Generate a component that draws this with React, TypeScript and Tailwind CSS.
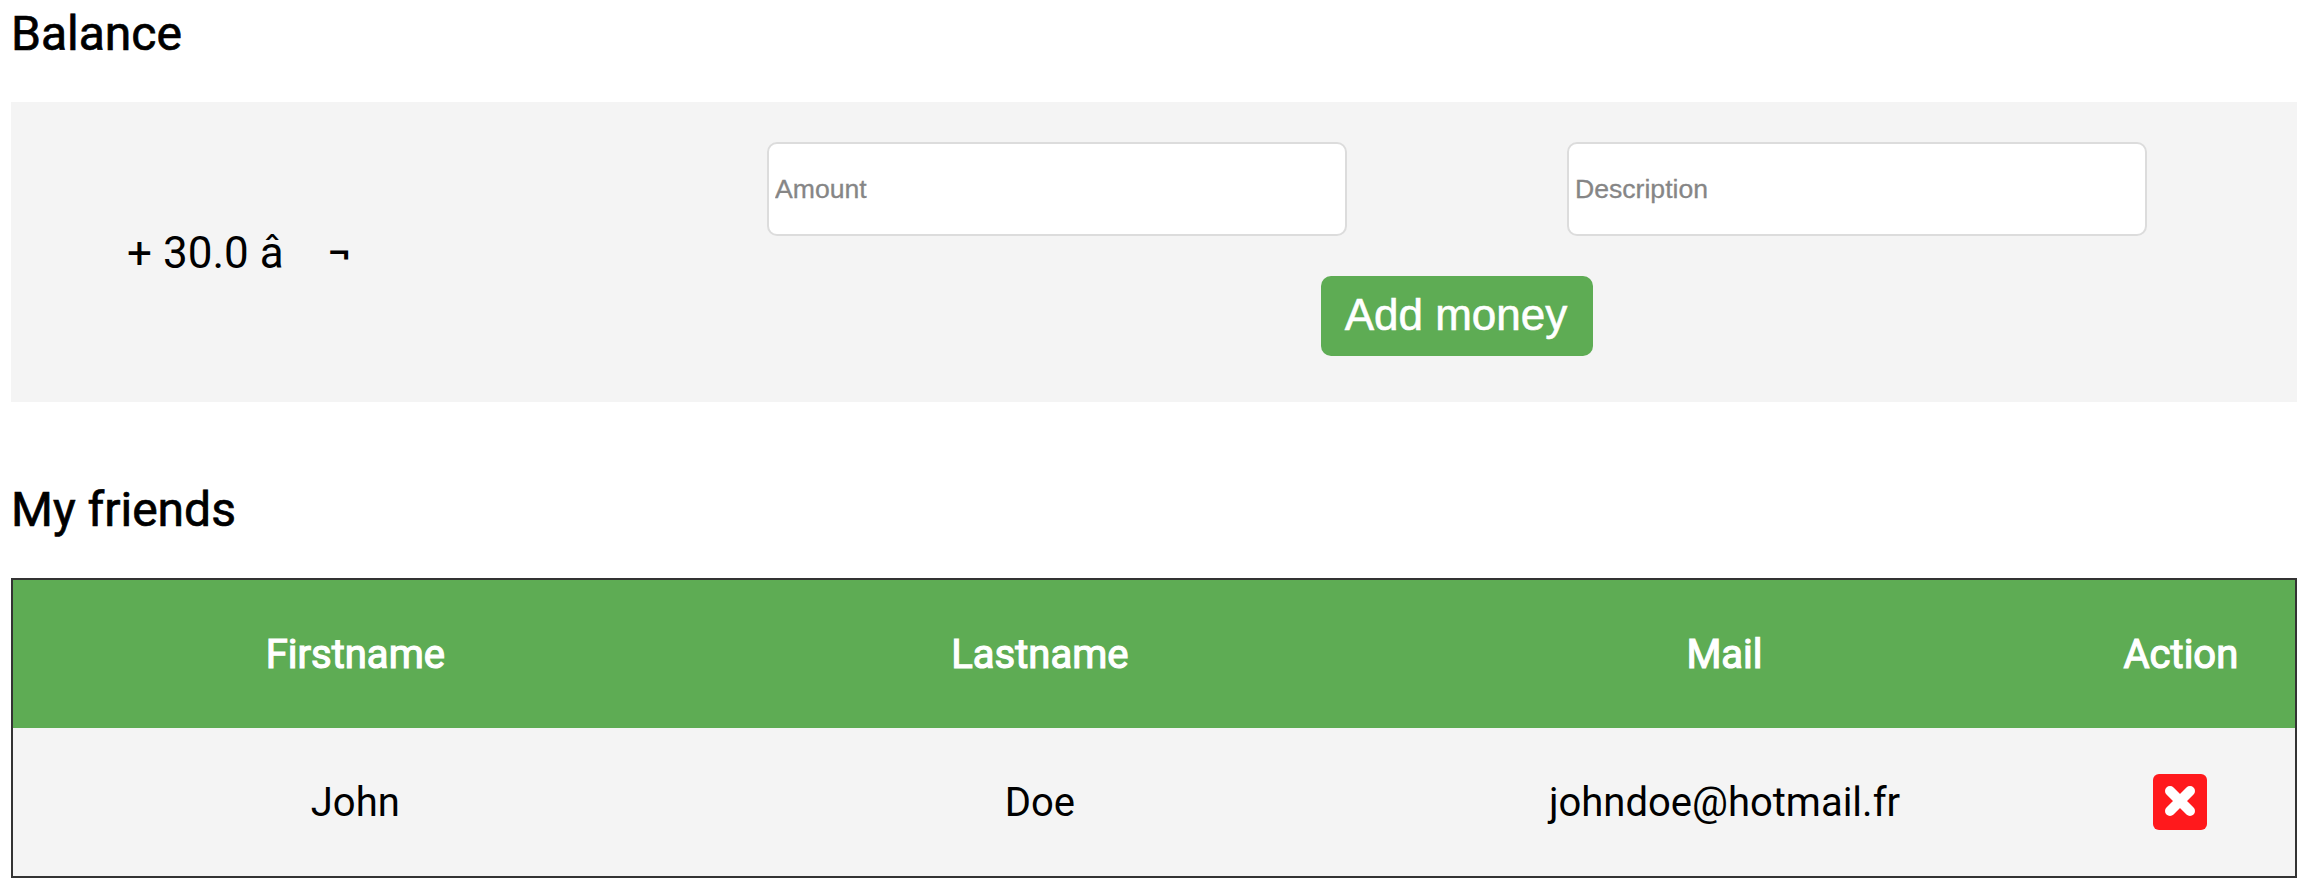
const columns = ["Firstname", "Lastname", "Mail", "Action"];
const friends = [{ firstname: "John", lastname: "Doe", mail: "johndoe@hotmail.fr" }];

const grid = "grid grid-cols-[3fr_3fr_3fr_1fr] items-center text-center";

function CrossIcon() {
  return (
    <svg viewBox="0 0 30 30" className="size-[30px] shrink-0" fill="none" stroke="currentColor" strokeWidth="10" strokeLinecap="round">
      <path d="M5 5 25 25M25 5 5 25" />
    </svg>
  );
}

function MoneyInput({ placeholder }: { placeholder: string }) {
  return (
    <input
      placeholder={placeholder}
      className="h-[94px] w-[580px] rounded-[10px] border-2 border-[#dcdcdc] bg-white px-[6px] font-['Liberation_Sans',sans-serif] text-[26.6px] placeholder:text-[#868686] [-webkit-text-stroke:0.3px_#868686]"
    />
  );
}

export default function App() {
  return (
    <main className="h-[892px] overflow-hidden bg-white pl-[11px] pr-[15px] font-[Roboto,sans-serif] text-black">
      <h2 className="h-[102px] pt-[4px] text-[48px] leading-[60px] [-webkit-text-stroke:0.7px_black]">Balance</h2>
      <section className="flex h-[300px] bg-[#f4f4f4]">
        <div className="flex w-[457px] items-center justify-center pt-[2px] text-[44px] whitespace-pre">
          {"+ 30.0 â"}
          <span className="ml-[44px]">¬</span>
        </div>
        <form className="ml-[189px] flex flex-1 flex-col pt-10">
          <div className="flex w-full justify-start gap-[220px] pl-[110px]">
            <MoneyInput placeholder="Amount" />
            <MoneyInput placeholder="Description" />
          </div>
          <button
            type="button"
            className="mt-10 ml-[664px] h-20 w-[272px] rounded-[10px] bg-[#5eac54] pr-[2px] pb-[2px] font-['Liberation_Sans',sans-serif] text-[44px] text-white [-webkit-text-stroke:0.6px_white]"
          >
            Add money
          </button>
        </form>
      </section>
      <h2 className="h-[176px] pt-[78px] text-[48px] leading-[60px] [-webkit-text-stroke:0.7px_black]">My friends</h2>
      <section className="h-[300px] border-2 border-[#333] bg-[#f4f4f4] text-[40px]">
        <div className={`${grid} h-[148px] bg-[#5eac54] pt-[2px] text-white [-webkit-text-stroke:1.2px_white]`}>
          {columns.map((c) => (
            <span key={c}>{c}</span>
          ))}
        </div>
        {friends.map((f) => (
          <div key={f.mail} className={`${grid} h-[148px]`}>
            <span className="pt-[2px]">{f.firstname}</span>
            <span className="pt-[2px]">{f.lastname}</span>
            <span className="pt-[2px]">{f.mail}</span>
            <button type="button" aria-label="Remove" className="ml-[86px] flex h-14 w-[54px] items-center justify-center rounded-[6px] bg-[#ff191c] pb-[2px] text-white">
              <CrossIcon />
            </button>
          </div>
        ))}
      </section>
    </main>
  );
}
